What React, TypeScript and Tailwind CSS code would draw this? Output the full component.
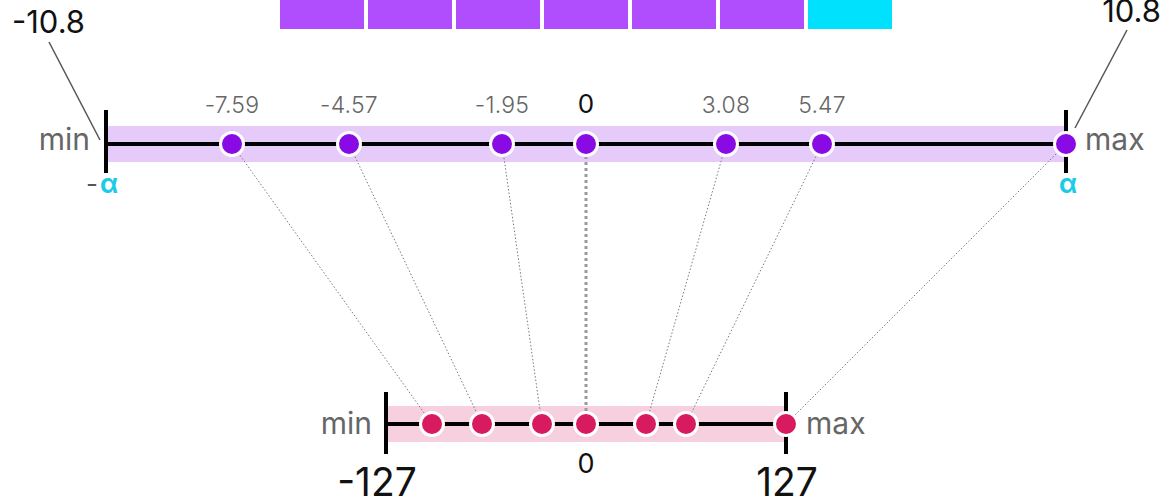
const topDots = [
  { x: 232, label: "-7.59" },
  { x: 349, label: "-4.57" },
  { x: 502, label: "-1.95" },
  { x: 586, label: "" },
  { x: 726, label: "3.08" },
  { x: 822, label: "5.47" },
  { x: 1066, label: "" },
]

const bottomDots = [432, 482, 542, 586, 646, 686, 786]

const boxes = [0, 1, 2, 3, 4, 5, 6]

export default function App() {
  return (
    <div className="w-[1172px] h-[498px] overflow-hidden bg-white">
      <svg width="1172" height="498" viewBox="0 0 1172 498" className="block font-['Inter','Liberation_Sans',sans-serif]">
        {/* buckets at the top */}
        {boxes.map((i) => (
          <rect
            key={i}
            x={280 + i * 88}
            y={0}
            width={84}
            height={29}
            className={i === 6 ? "fill-[#00e1fd]" : "fill-[#b04dfd]"}
          />
        ))}

        {/* range bands */}
        <rect x={106} y={126} width={960} height={36} className="fill-[#e6cbfa]" />
        <rect x={386} y={406} width={400} height={36} className="fill-[#f7d0e0]" />

        {/* leader lines */}
        <line x1={49} y1={42} x2={100} y2={140} strokeWidth={1.5} className="stroke-[#555]" />
        <line x1={1127} y1={30} x2={1075} y2={128} strokeWidth={1.5} className="stroke-[#555]" />

        {/* mapping lines */}
        {topDots.map((d, i) =>
          i === 3 ? null : (
            <line
              key={i}
              x1={d.x}
              y1={144}
              x2={bottomDots[i]}
              y2={424}
              strokeWidth={1}
              strokeDasharray="1.5 2"
              className="stroke-[#7a7a7a]"
            />
          ),
        )}
        <line x1={586} y1={150} x2={586} y2={420} strokeWidth={3} strokeDasharray="3 3" className="stroke-[#9a9a9a]" />

        {/* axes */}
        <g className="stroke-black">
          <line x1={106} y1={144} x2={1066} y2={144} strokeWidth={4} />
          <line x1={106} y1={110} x2={106} y2={173} strokeWidth={4} />
          <line x1={1066} y1={110} x2={1066} y2={173} strokeWidth={4} />
          <line x1={586} y1={138} x2={586} y2={150} strokeWidth={3} />

          <line x1={386} y1={424} x2={786} y2={424} strokeWidth={4} />
          <line x1={386} y1={392} x2={386} y2={454} strokeWidth={4} />
          <line x1={786} y1={392} x2={786} y2={454} strokeWidth={4} />
          <line x1={586} y1={418} x2={586} y2={430} strokeWidth={3} />
        </g>

        {/* dots */}
        {topDots.map((d, i) => (
          <circle key={i} cx={d.x} cy={144} r={11.5} strokeWidth={3} className="fill-[#8a0ae6] stroke-white" />
        ))}
        {bottomDots.map((x, i) => (
          <circle key={i} cx={x} cy={424} r={11.5} strokeWidth={3} className="fill-[#d81b5e] stroke-white" />
        ))}

        {/* labels */}
        <g className="fill-[#666] text-[23px] font-light tracking-[0.2px]">
          {topDots.map((d, i) =>
            d.label ? (
              <text key={i} x={d.x} y={113} textAnchor="middle">
                {d.label}
              </text>
            ) : null,
          )}
        </g>
        <text x={586} y={113} textAnchor="middle" className="fill-[#111] text-[26px]">0</text>

        <text x={12} y={33} className="fill-[#111] text-[31px]">-10.8</text>
        <text x={1161} y={22} textAnchor="end" className="fill-[#111] text-[31px]">10.8</text>

        <g className="fill-[#666] text-[30px]">
          <text x={90} y={150} textAnchor="end">min</text>
          <text x={1085} y={150}>max</text>
          <text x={372} y={434} textAnchor="end">min</text>
          <text x={806} y={434}>max</text>
        </g>

        <text x={98} y={193} textAnchor="end" className="fill-[#555] text-[26px]">-</text>
        <text x={109} y={193} textAnchor="middle" className="fill-[#1ccbe8] text-[26px] font-bold">α</text>
        <text x={1068} y={193} textAnchor="middle" className="fill-[#1ccbe8] text-[26px] font-bold">α</text>

        <text x={586} y={473} textAnchor="middle" className="fill-[#111] text-[27px]">0</text>
        <text x={377} y={496} textAnchor="middle" className="fill-[#111] text-[39px]">-127</text>
        <text x={787} y={496} textAnchor="middle" className="fill-[#111] text-[39px]">127</text>
      </svg>
    </div>
  )
}
